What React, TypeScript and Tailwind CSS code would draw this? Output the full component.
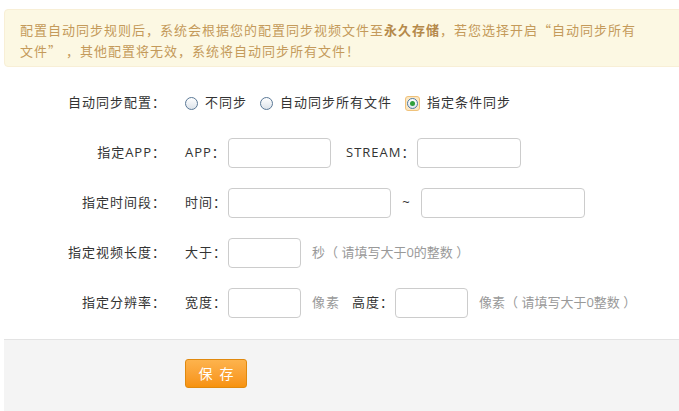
import React, { FC, useState } from "react"

const font = { fontFamily: '"Open Sans", "Noto Sans CJK SC", sans-serif' }
const cjk = { fontFamily: '"Noto Sans CJK SC", sans-serif' }

const Radio: FC<{ checked?: boolean; label: string; onClick: () => void }> = ({ checked, label, onClick }) => (
    <label className="flex items-center cursor-pointer" onClick={onClick}>
        {checked ? (
            <span className="w-[15px] h-[15px] rounded-[3px] border border-[#f0c27a] bg-[#fbe7c4] flex items-center justify-center">
                <span className="w-[11px] h-[11px] rounded-full border border-[#4d7aa6] bg-gradient-to-b from-[#ffffff] to-[#dfe6ee] flex items-center justify-center">
                    <span className="w-[5px] h-[5px] rounded-full bg-[#2e9f3a]" />
                </span>
            </span>
        ) : (
            <span className="w-[13px] h-[13px] rounded-full border border-[#5a7896] bg-gradient-to-b from-[#ffffff] to-[#dde3ea]" />
        )}
        <span className="ml-[7px] text-[13px] tracking-[1px] text-[#333]">{label}</span>
    </label>
)

const Row: FC<{ label: string; children: React.ReactNode }> = ({ label, children }) => (
    <div className="flex items-center h-[30px]">
        <div className="w-[162px] text-right text-[13px] tracking-[1px] text-[#333] shrink-0">{label}</div>
        <div className="ml-[19px] flex items-center">{children}</div>
    </div>
)

const Input: FC<{ w: string }> = ({ w }) => (
    <input className={`${w} h-[30px] border border-[#cccccc] rounded-[4px] bg-white outline-none px-2 text-[13px]`} />
)

export default function App() {
    const [mode, setMode] = useState(2)

    return (
        <div className="w-[679px] h-[411px] overflow-hidden bg-white pl-[4px] pt-[9px] [text-spacing-trim:space-all]" style={font}>
            {/* notice */}
            <div
                className="w-[700px] h-[58px] bg-[#fcf8e3] border border-[#f8efd6] rounded-[4px] pl-[15px] pt-[9px] text-[13px] leading-[21px] tracking-[1px] text-[#c49a5a]"
                style={cjk}
            >
                配置自动同步规则后，系统会根据您的配置同步视频文件至<b className="font-bold text-[#b5894a]">永久存储</b>，若您选择开启“自动同步所有<br />
                文件” ，其他配置将无效，系统将自动同步所有文件！
            </div>

            <div className="pt-[21px] pb-[21px] flex flex-col gap-[20px]">
                <Row label="自动同步配置：">
                    <div className="flex items-center gap-[13px]">
                        <Radio label="不同步" checked={mode === 0} onClick={() => setMode(0)} />
                        <Radio label="自动同步所有文件" checked={mode === 1} onClick={() => setMode(1)} />
                        <Radio label="指定条件同步" checked={mode === 2} onClick={() => setMode(2)} />
                    </div>
                </Row>
                <Row label="指定APP：">
                    <span className="w-[43px] text-[13px] tracking-[1px] text-[#333]">APP：</span>
                    <Input w="w-[103px]" />
                    <span className="ml-[15px] w-[71px] text-[13px] tracking-[1px] text-[#333]">STREAM：</span>
                    <Input w="w-[104px]" />
                </Row>
                <Row label="指定时间段：">
                    <span className="w-[43px] text-[13px] tracking-[1px] text-[#333]">时间：</span>
                    <Input w="w-[163px]" />
                    <span className="w-[30px] text-center text-[13px] text-[#333]">~</span>
                    <Input w="w-[164px]" />
                </Row>
                <Row label="指定视频长度：">
                    <span className="w-[43px] text-[13px] tracking-[1px] text-[#333]">大于：</span>
                    <Input w="w-[73px]" />
                    <span className="ml-[11px] text-[13px] text-[#999]">秒（ 请填写大于0的整数 ）</span>
                </Row>
                <Row label="指定分辨率：">
                    <span className="w-[43px] text-[13px] tracking-[1px] text-[#333]">宽度：</span>
                    <Input w="w-[73px]" />
                    <span className="ml-[11px] text-[13px] tracking-[1px] text-[#999]">像素</span>
                    <span className="ml-[12px] w-[43px] text-[13px] tracking-[1px] text-[#333]">高度：</span>
                    <Input w="w-[73px]" />
                    <span className="ml-[11px] text-[13px] text-[#999]">像素（ 请填写大于0整数 ）</span>
                </Row>
            </div>

            <div className="h-[80px] bg-[#f4f4f4] border-t border-[#e3e3e3] pt-[19px] pl-[181px]">
                <button className="w-[62px] h-[29px] rounded-[3px] border border-[#e0890e] bg-gradient-to-b from-[#fdb34c] to-[#f7920a] text-white text-[14px] tracking-[7px] pl-[7px]">
                    保存
                </button>
            </div>
        </div>
    )
}
